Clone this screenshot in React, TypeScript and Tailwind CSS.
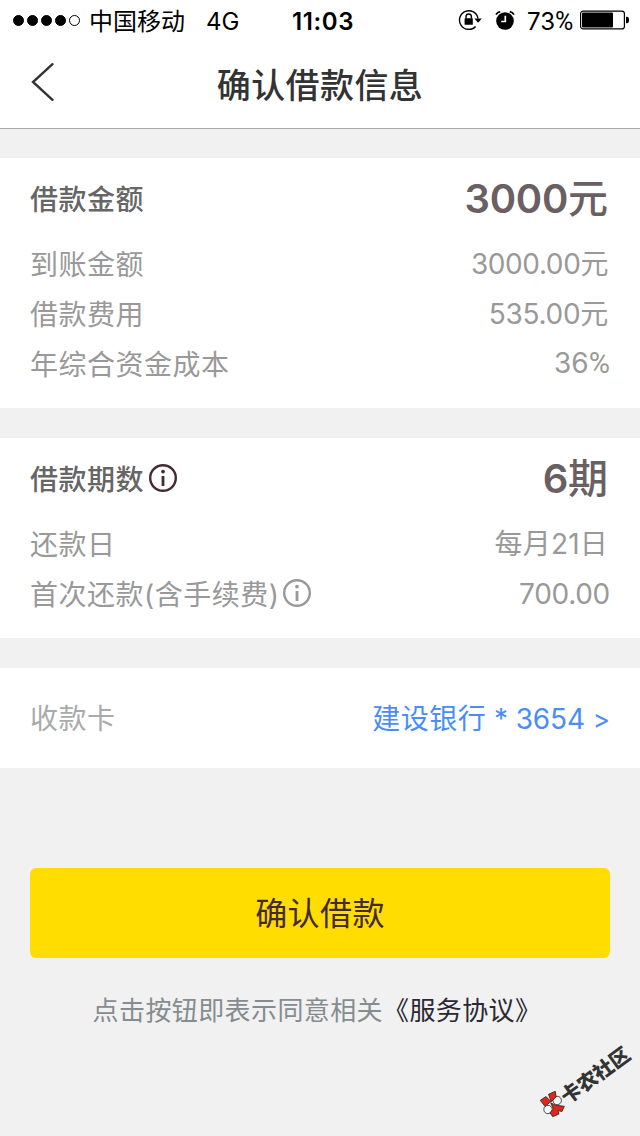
import type { ReactNode } from 'react'
import { clsx } from 'clsx'

const SIGNAL = [true, true, true, true, false]

function StatusBar() {
  return (
    <div className="flex h-10 items-center text-black">
      <div className="flex w-[292px] items-center pl-[13px]">
        <div className="flex gap-[3px]">
          {SIGNAL.map((on, i) => (
            <span key={i} className={clsx('h-[11px] w-[11px] rounded-full border border-black', on && 'bg-black')} />
          ))}
        </div>
        <span className="ml-[9px] pt-[3px] text-[24px] leading-10">中国移动</span>
        <span className="ml-[21px] pt-[3px] text-[24px] leading-10">4G</span>
      </div>
      <span className="w-[166px] pt-[3px] text-[24px] font-semibold leading-10 tracking-[0.6px]">11:03</span>
      <svg className="h-[22px] w-[24px] shrink-0" viewBox="0 0 24 22" fill="none">
        <path d="M17.6 17.4A9.3 9.3 0 1 1 20 9.6" stroke="#000" strokeWidth="1.4" />
        <path d="M16.4 9.6h7.4L20.1 13.8z" fill="#000" />
        <path d="M8 9.5V7.7a2.7 2.7 0 0 1 5.4 0v1.8" stroke="#000" strokeWidth="1.4" />
        <rect x="6.6" y="9.2" width="8.2" height="6.6" rx=".6" fill="#000" />
      </svg>
      <svg className="ml-[13px] h-[20px] w-[20px] shrink-0" viewBox="0 0 20 20" fill="none">
        <circle cx="10" cy="11" r="8.8" fill="#000" />
        <path d="M1 4.6A6 6 0 0 1 5.2 1.6M14.8 1.6A6 6 0 0 1 19 4.6" stroke="#000" strokeWidth="1.8" />
        <path d="M10.3 5.8v5.7H6.2" stroke="#fff" strokeWidth="1.7" />
      </svg>
      <span className="ml-[12px] w-[53px] whitespace-nowrap pt-[3px] text-[24px] leading-10">
        73<span className="font-[Roboto] text-[25px]">%</span>
      </span>
      <svg className="h-[20px] w-[50px] shrink-0" viewBox="0 0 50 20" fill="none">
        <rect x=".6" y="1.1" width="43.8" height="17.8" rx="2.5" stroke="#000" strokeWidth="1.2" />
        <rect x="2" y="2.5" width="31" height="15" rx="1" fill="#000" />
        <path d="M46 6.8h1q2 0 2 3.2t-2 3.2h-1z" fill="#000" />
      </svg>
    </div>
  )
}

function InfoIcon({ className }: { className?: string }) {
  return (
    <svg className={clsx('h-7 w-7 shrink-0', className)} viewBox="0 0 28 28" fill="none">
      <circle cx="14" cy="14" r="12.8" stroke="currentColor" strokeWidth="2.4" />
      <circle cx="14" cy="7.6" r="1.9" fill="currentColor" />
      <path d="M14 12v10" stroke="currentColor" strokeWidth="2.8" />
    </svg>
  )
}

function HeadRow({ label, value, unit, icon }: { label: string; value: string; unit: string; icon?: ReactNode }) {
  return (
    <div className="flex h-20 items-center justify-between">
      <span className="flex items-center text-[28px] font-medium tracking-[0.5px] text-[#666]">
        <span className="pt-[3px]">{label}</span>
        {icon}
      </span>
      <span className="pr-[2px] pt-[2px] text-[40px] font-semibold leading-none text-[#6a6063]">
        <span className="tracking-[-0.3px]">{value}</span>
        <span className="font-medium">{unit}</span>
      </span>
    </div>
  )
}

function Row({ label, children, icon }: { label: string; children: ReactNode; icon?: ReactNode }) {
  return (
    <div className="flex h-[50px] items-center justify-between text-[28px] text-[#999]">
      <span className="flex items-center tracking-[0.5px]">
        <span className="pt-[3px]">{label}</span>
        {icon}
      </span>
      <span className="pt-[2px]">{children}</span>
    </div>
  )
}

function Watermark() {
  return (
    <svg className="absolute bottom-0 right-0 h-[106px] w-[120px]" viewBox="0 0 120 106">
      <g stroke="#222" strokeWidth=".8">
        <circle cx="37.2" cy="70.5" r="4.2" fill="#f7f7f7" />
        <circle cx="28" cy="79.5" r="4.2" fill="#f7f7f7" />
        <path d="M20.3 70.3L26 66.5l4.9 5-5.9 4.9z" fill="#e1261c" />
        <path d="M28.5 64.3l6.8-3 .8 5.4-4.8 5z" fill="#e1261c" />
        <path d="M30.7 72.8l4.8 2.4 8.8 1.1-2.3 5.2-4-.8 1 3.3-6.3 2.7-2.7-4 3.3-3.7z" fill="#e1261c" />
      </g>
      <text
        transform="translate(75.5 45.5) rotate(-36)"
        textAnchor="middle"
        dominantBaseline="central"
        className="fill-[#333] text-[20px] font-black"
      >
        卡农社区
      </text>
    </svg>
  )
}

export default function App() {
  return (
    <div className="relative h-[1136px] w-[640px] overflow-hidden bg-[#f1f1f1] font-[Inter,'Noto_Sans_CJK_SC',sans-serif]">
      <header className="h-[129px] border-b border-[#aaa] bg-white">
        <StatusBar />
        <div className="grid h-[88px] grid-cols-[100px_1fr_100px] items-center">
          <button className="pb-[4px] pl-[31px]" aria-label="返回">
            <svg className="h-[38px] w-[23px]" viewBox="0 0 23 38" fill="none">
              <path d="M21.5 1.2L2 19l19.5 17.8" stroke="#333" strokeWidth="2.4" strokeLinecap="round" />
            </svg>
          </button>
          <h1 className="pt-[2px] text-center text-[34px] font-medium tracking-[0.4px] text-[#333]">确认借款信息</h1>
        </div>
      </header>

      <main className="mt-[29px] flex flex-col gap-[30px]">
        <section className="bg-white px-[30px] pb-5">
          <HeadRow label="借款金额" value="3000" unit="元" />
          <Row label="到账金额">
            <span className="pr-[2px] tracking-[-0.4px]">3000.00元</span>
          </Row>
          <Row label="借款费用">
            <span className="pr-[2px] tracking-[-0.3px]">535.00元</span>
          </Row>
          <Row label="年综合资金成本">
            36<span className="font-[Roboto] text-[29px]">%</span>
          </Row>
        </section>

        <section className="bg-white px-[30px] pb-5">
          <HeadRow label="借款期数" value="6" unit="期" icon={<InfoIcon className="ml-[5px] text-[#442a33]" />} />
          <Row label="还款日">
            <span className="pr-[2px] tracking-[0.2px]">每月21日</span>
          </Row>
          <Row label="首次还款(含手续费)" icon={<InfoIcon className="ml-[4px]" />}>
            <span className="tracking-[-0.3px]">700.00</span>
          </Row>
        </section>

        <section className="flex h-[100px] items-center justify-between bg-white px-[30px] pt-[2px] text-[28px]">
          <span className="tracking-[0.5px] text-[#aaa]">收款卡</span>
          <span className="text-[#4a8df6]">
            <span className="tracking-[0.5px]">建设银行</span>
            <span className="tracking-[-0.1px]"> * 3654 </span>
            <span className="text-[26px]">&gt;</span>
          </span>
        </section>
      </main>

      <footer className="px-[30px] pt-[100px]">
        <button className="h-[90px] w-full rounded-md bg-[#ffdd00] pt-[2px] text-[32px] tracking-[0.4px] text-[#442a33]">
          确认借款
        </button>
        <p className="mt-[33px] whitespace-nowrap pr-[6px] text-center text-[26px] leading-10 tracking-[0.4px] text-[#858c8f]">
          点击按钮即表示同意相关<span className="text-[#2b2833]">《服务协议》</span>
        </p>
      </footer>

      <Watermark />
    </div>
  )
}
